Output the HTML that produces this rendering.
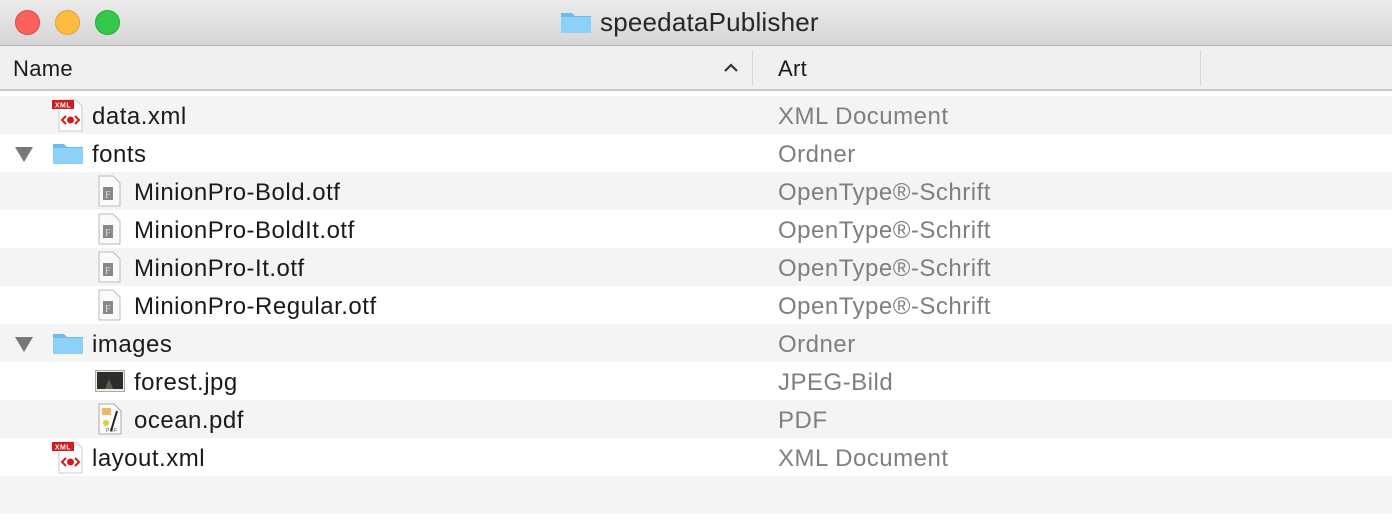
<!DOCTYPE html>
<html><head><meta charset="utf-8"><style>
*{margin:0;padding:0;box-sizing:border-box}
body{width:1392px;height:526px;background:#fff;font-family:"Liberation Sans",sans-serif;position:relative;overflow:hidden}
.title{position:absolute;left:0;top:0;width:1392px;height:46px;background:linear-gradient(#ebebeb,#d6d6d6);border-bottom:1px solid #b3b3b3}
.tl{position:absolute;top:10px;width:25px;height:25px;border-radius:50%}
.ttext{position:absolute;left:600px;top:7px;font-size:26px;letter-spacing:0.2px;color:#262626}
.hdr{position:absolute;left:0;top:46px;width:1392px;height:45px;background:#f0f0f0;border-bottom:2px solid #c8c8c8}
.hdr span{position:absolute;top:10px;font-size:22px;letter-spacing:0.3px;color:#1a1a1a}
.sep{position:absolute;top:4px;width:1px;height:36px;background:#d6d6d6}
.row{position:absolute;left:0;width:1392px;height:38px;font-size:24px;letter-spacing:0.5px;color:#1a1a1a}
.g{background:#f4f4f4}
.row .n{position:absolute;top:7px}
.row .a{position:absolute;left:778px;top:7px;color:#7f7f7f}
.tri{position:absolute;left:15px;top:13px;width:0;height:0;border-left:9px solid transparent;border-right:9px solid transparent;border-top:15px solid #777}
</style></head><body>
<div class="title">
<div class="tl" style="left:15px;background:#fc605c;border:1px solid #de4a46"></div>
<div class="tl" style="left:55px;background:#fdbc40;border:1px solid #dea236"></div>
<div class="tl" style="left:95px;background:#34c84a;border:1px solid #27aa35"></div>
<svg style="position:absolute;left:560px;top:10px" width="32" height="24"><path d="M1 3h11l3 3h16v17H1z" fill="#6bbcf0"/><rect x="1" y="7" width="30" height="16" fill="#8dd0f8"/></svg>
<div class="ttext">speedataPublisher</div>
</div>
<div class="hdr">
<span style="left:13px">Name</span>
<svg style="position:absolute;left:723px;top:17px" width="16" height="10"><path d="M2 8l6-6 6 6" stroke="#333" stroke-width="2.2" fill="none"/></svg>
<div class="sep" style="left:752px"></div>
<span style="left:778px">Art</span>
<div class="sep" style="left:1200px"></div>
</div>

<svg width="0" height="0" style="position:absolute"><defs>
<symbol id="xml" viewBox="0 0 34 34"><path d="M8 2h17l6 6v25H8z" fill="#fff" stroke="#ccc"/><rect x="1" y="2" width="22" height="9" fill="#d01c1c"/><text x="12" y="9.5" font-size="7" font-weight="bold" fill="#fff" text-anchor="middle" font-family="Liberation Sans">XML</text><path d="M15 18l-4 4 4 4M24 18l4 4-4 4" stroke="#d01c1c" stroke-width="2" fill="none"/><circle cx="19.5" cy="22" r="3.5" fill="#d01c1c"/></symbol>
<symbol id="fold" viewBox="0 0 32 24"><path d="M1 3h11l3 3h16v17H1z" fill="#6bbcf0"/><rect x="1" y="7" width="30" height="16" fill="#8dd0f8"/></symbol>
<symbol id="otf" viewBox="0 0 26 32"><path d="M3 1h14l7 7v23H3z" fill="#fafafa" stroke="#bbb"/><rect x="7" y="12" width="10" height="13" fill="#888"/><text x="12" y="23" font-size="10" fill="#ddd" text-anchor="middle" font-family="Liberation Serif">F</text></symbol>
</defs></svg>

<div class="row g" style="top:96px"><svg style="position:absolute;left:51px;top:2px" width="34" height="34"><use href="#xml"/></svg><span class="n" style="left:92px">data.xml</span><span class="a">XML Document</span></div>
<div class="row" style="top:134px"><div class="tri"></div><svg style="position:absolute;left:52px;top:7px" width="32" height="24"><use href="#fold"/></svg><span class="n" style="left:92px">fonts</span><span class="a">Ordner</span></div>
<div class="row g" style="top:172px"><svg style="position:absolute;left:96px;top:3px" width="26" height="32"><use href="#otf"/></svg><span class="n" style="left:134px">MinionPro-Bold.otf</span><span class="a">OpenType®-Schrift</span></div>
<div class="row" style="top:210px"><svg style="position:absolute;left:96px;top:3px" width="26" height="32"><use href="#otf"/></svg><span class="n" style="left:134px">MinionPro-BoldIt.otf</span><span class="a">OpenType®-Schrift</span></div>
<div class="row g" style="top:248px"><svg style="position:absolute;left:96px;top:3px" width="26" height="32"><use href="#otf"/></svg><span class="n" style="left:134px">MinionPro-It.otf</span><span class="a">OpenType®-Schrift</span></div>
<div class="row" style="top:286px"><svg style="position:absolute;left:96px;top:3px" width="26" height="32"><use href="#otf"/></svg><span class="n" style="left:134px">MinionPro-Regular.otf</span><span class="a">OpenType®-Schrift</span></div>
<div class="row g" style="top:324px"><div class="tri"></div><svg style="position:absolute;left:52px;top:7px" width="32" height="24"><use href="#fold"/></svg><span class="n" style="left:92px">images</span><span class="a">Ordner</span></div>
<div class="row" style="top:362px"><svg style="position:absolute;left:95px;top:8px" width="30" height="22"><rect x="0.5" y="0.5" width="29" height="21" fill="#eee" stroke="#aaa"/><rect x="2" y="2" width="26" height="17" fill="#2c2f28"/><path d="M10 19l4-10 4 10z" fill="#5a5e50"/></svg><span class="n" style="left:134px">forest.jpg</span><span class="a">JPEG-Bild</span></div>
<div class="row g" style="top:400px"><svg style="position:absolute;left:97px;top:3px" width="26" height="32"><path d="M2 1h15l7 7v23H2z" fill="#fafafa" stroke="#aaa"/><rect x="5" y="5" width="9" height="7" fill="#f0b860"/><circle cx="9" cy="20" r="3" fill="#d8d040"/><path d="M20 8l-6 20" stroke="#222" stroke-width="2"/><text x="9" y="29" font-size="5" fill="#555" font-family="Liberation Sans">PDF</text></svg><span class="n" style="left:134px">ocean.pdf</span><span class="a">PDF</span></div>
<div class="row" style="top:438px"><svg style="position:absolute;left:51px;top:2px" width="34" height="34"><use href="#xml"/></svg><span class="n" style="left:92px">layout.xml</span><span class="a">XML Document</span></div>
<div class="row g" style="top:476px"></div>
</body></html>
